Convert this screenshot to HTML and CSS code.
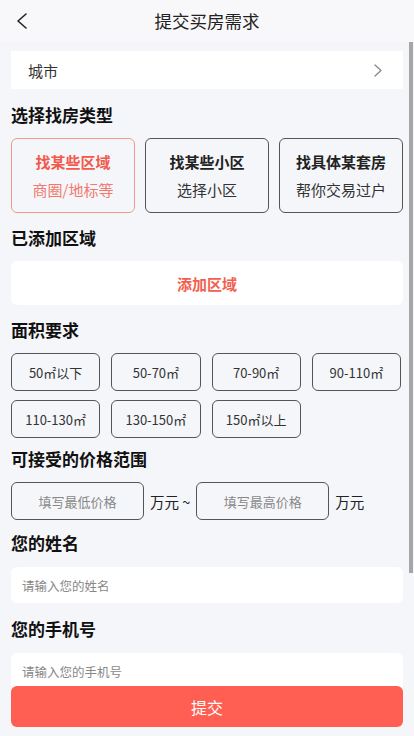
FILE: index.html
```html
<!DOCTYPE html>
<html lang="zh-CN">
<head>
<meta charset="utf-8">
<meta name="viewport" content="width=device-width, initial-scale=1">
<title>提交买房需求</title>
<link rel="stylesheet" href="styles.css">
</head>
<body>
<div class="app">
  <header class="topbar">
    <button class="back" aria-label="返回">
      <svg width="12" height="16" viewBox="0 0 12 16"><path d="M10 1 L2 8 L10 15" fill="none" stroke="#222" stroke-width="1.6" stroke-linecap="round" stroke-linejoin="round"/></svg>
    </button>
    <h1 class="title">提交买房需求</h1>
  </header>

  <main class="page">
    <div class="city-row">
      <span>城市</span>
      <svg class="chev" width="8" height="13" viewBox="0 0 8 13"><path d="M1 1 L7 6.5 L1 12" fill="none" stroke="#888" stroke-width="1.3" stroke-linecap="round" stroke-linejoin="round"/></svg>
    </div>

    <h2 class="sec sec-first">选择找房类型</h2>
    <div class="types">
      <div class="type active">
        <div class="type-title">找某些区域</div>
        <div class="type-sub">商圈/地标等</div>
      </div>
      <div class="type">
        <div class="type-title">找某些小区</div>
        <div class="type-sub">选择小区</div>
      </div>
      <div class="type">
        <div class="type-title">找具体某套房</div>
        <div class="type-sub">帮你交易过户</div>
      </div>
    </div>

    <h2 class="sec">已添加区域</h2>
    <div class="add-box">添加区域</div>

    <h2 class="sec">面积要求</h2>
    <div class="areas">
      <div class="area">50㎡以下</div>
      <div class="area">50-70㎡</div>
      <div class="area">70-90㎡</div>
      <div class="area">90-110㎡</div>
      <div class="area">110-130㎡</div>
      <div class="area">130-150㎡</div>
      <div class="area">150㎡以上</div>
    </div>

    <h2 class="sec sec-price">可接受的价格范围</h2>
    <div class="price-row">
      <div class="price-input">填写最低价格</div>
      <span class="unit">万元 ~</span>
      <div class="price-input">填写最高价格</div>
      <span class="unit">万元</span>
    </div>

    <h2 class="sec sec-name">您的姓名</h2>
    <div class="field">请输入您的姓名</div>

    <h2 class="sec sec-phone">您的手机号</h2>
    <div class="field field-phone">请输入您的手机号</div>
  </main>

  <div class="scroll-thumb"></div>
  <button class="submit">提交</button>
</div>
</body>
</html>
```

FILE: styles.css
```css
* { box-sizing: border-box; }
html, body {
  margin: 0;
  padding: 0;
  background: #f5f6fa;
  font-family: "Noto Sans CJK SC", "Noto Sans", sans-serif;
  color: #222;
}
.app {
  position: relative;
  width: 414px;
  height: 736px;
  display: flex;
  flex-direction: column;
  overflow: hidden;
}
.topbar {
  height: 42px;
  flex: none;
  display: flex;
  align-items: center;
  justify-content: center;
  position: relative;
  background: #f8f8fa;
}
.back {
  position: absolute;
  left: 16px;
  top: 13px;
  border: 0;
  background: none;
  padding: 0;
  width: 14px;
  height: 16px;
  display: flex;
}
.title {
  margin: 0;
  font-size: 17.5px;
  font-weight: 400;
  color: #222;
  line-height: 24px;
}
.page {
  flex: 1;
  overflow-y: auto;
  scrollbar-width: none;
  padding: 9px 11px 260px 11px;
}
.page::-webkit-scrollbar { display: none; }
.scroll-thumb {
  position: absolute;
  left: 409px;
  top: 42px;
  width: 4px;
  height: 531px;
  background: #a6a6a6;
}
.city-row {
  height: 38px;
  background: #fff;
  display: flex;
  align-items: center;
  justify-content: space-between;
  padding: 0 21px 0 17px;
  font-size: 15px;
  color: #333;
}
.sec {
  margin: 14px 0 12px;
  font-size: 17px;
  font-weight: 700;
  line-height: 22px;
  color: #111;
}
.sec-first { margin-top: 15px; }
.types {
  display: grid;
  grid-template-columns: repeat(3, 1fr);
  gap: 10px;
}
.type {
  height: 75px;
  border: 1px solid #555;
  border-radius: 6px;
  display: flex;
  flex-direction: column;
  align-items: center;
  justify-content: center;
  gap: 7px;
}
.type-title {
  font-size: 15px;
  font-weight: 700;
  line-height: 21px;
  color: #222;
}
.type-sub {
  font-size: 15px;
  line-height: 21px;
  color: #333;
}
.type.active { border-color: #f19a92; }
.type.active .type-title { color: #f2594b; }
.type.active .type-sub { color: #f07a6f; }
.add-box {
  height: 44px;
  background: #fff;
  border-radius: 6px;
  display: flex;
  align-items: center;
  justify-content: center;
  font-size: 15px;
  font-weight: 700;
  color: #f2604f;
}
.areas {
  display: grid;
  grid-template-columns: repeat(4, 1fr);
  column-gap: 11px;
  row-gap: 9px;
  padding-right: 2px;
}
.area {
  height: 38px;
  border: 1px solid #555;
  border-radius: 6px;
  display: flex;
  align-items: center;
  justify-content: center;
  font-size: 13px;
  color: #333;
}
.sec-price { margin-top: 10px; }
.price-row {
  display: flex;
  align-items: center;
  gap: 6px;
}
.price-input {
  width: 133px;
  height: 38px;
  border: 1px solid #555;
  border-radius: 6px;
  display: flex;
  align-items: center;
  justify-content: center;
  font-size: 13px;
  color: #888;
}
.unit {
  font-size: 14.5px;
  color: #222;
}
.sec-name { margin: 12px 0 13px; }
.sec-phone { margin: 15px 0 13px; }
.field {
  height: 36px;
  background: #fff;
  border-radius: 6px;
  display: flex;
  align-items: center;
  padding-left: 11px;
  font-size: 12.5px;
  color: #888;
}
.field-phone { height: 37px; }
.submit {
  position: fixed;
  left: 11px;
  top: 686px;
  width: 392px;
  height: 41px;
  border: 0;
  border-radius: 6px;
  background: #fe5f52;
  color: #fff;
  font-family: "Noto Sans CJK SC", sans-serif;
  font-size: 16px;
  padding: 0;
}
```
